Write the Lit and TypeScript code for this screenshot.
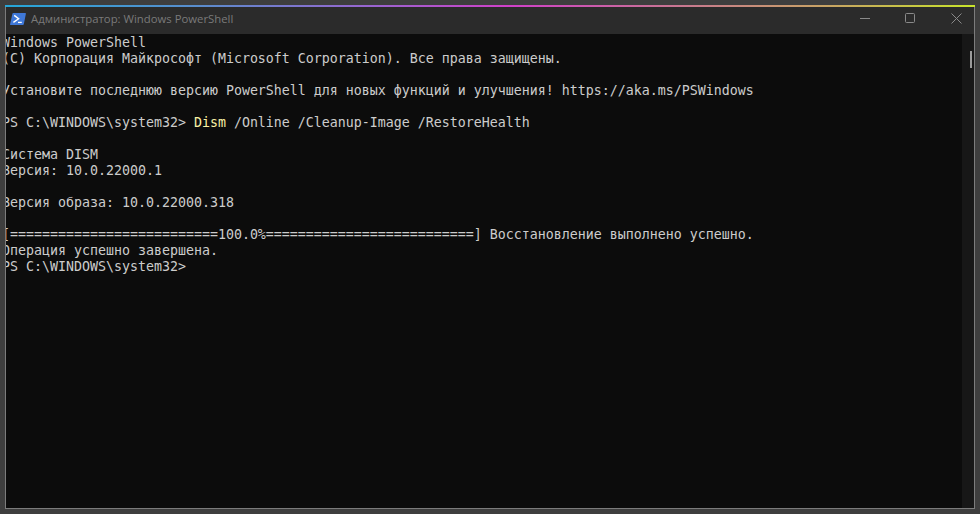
import { LitElement, html, css, svg } from "lit";
import { customElement } from "lit/decorators.js";

const rows: { t: string; y?: string }[] = [
  { t: "Windows PowerShell" },
  { t: "(C) Корпорация Майкрософт (Microsoft Corporation). Все права защищены." },
  { t: "" },
  { t: "Установите последнюю версию PowerShell для новых функций и улучшения! https://aka.ms/PSWindows" },
  { t: "" },
  { t: "PS C:\\WINDOWS\\system32> ", y: "Dism" },
  { t: "" },
  { t: "Система DISM" },
  { t: "Версия: 10.0.22000.1" },
  { t: "" },
  { t: "Версия образа: 10.0.22000.318" },
  { t: "" },
  { t: "[==========================100.0%==========================] Восстановление выполнено успешно." },
  { t: "Операция успешно завершена." },
  { t: "PS C:\\WINDOWS\\system32>" },
];

@customElement("app-root")
export class AppRoot extends LitElement {
  static styles = css`
    :host { display: block; width: 980px; height: 514px; overflow: hidden; }
    .frame { box-sizing: border-box; width: 980px; height: 514px; padding: 5px; background: #3e3e3e; display: flex; flex-direction: column; }
    .accent { height: 2px; flex: none; background: linear-gradient(90deg, #25a6d8 0%, #5a8ccc 20%, #9a64d0 38%, #d040c8 52%, #c8788f 70%, #c8a860 86%, #c8e42a 100%); }
    .win { flex: 1; min-height: 0; display: flex; flex-direction: column; border-left: 1px solid #7c7c7c; border-right: 1px solid #7c7c7c; border-bottom: 1px solid #7c7c7c; }
    .title { height: 27px; flex: none; box-sizing: border-box; padding-bottom: 4px; background: #2b2b2b; display: flex; align-items: center; }
    .ps { margin-left: 4px; width: 16px; height: 12px; flex: none; }
    .ttl { margin-left: 5px; flex: 1; font: 11.33px/16px "Open Sans", "Noto Sans", sans-serif; color: #7a7a7a; }
    .ctls { display: flex; align-items: center; gap: 34.5px; margin-right: 12.5px; flex: none; }
    .ctl { width: 11px; height: 11px; display: block; }
    .body { flex: 1; min-height: 0; display: flex; }
    .term { flex: 1; min-width: 0; overflow: hidden; background: #0c0c0c; padding-top: 1px; box-sizing: border-box; font: 13.29px/16px "DejaVu Sans Mono", monospace; color: #cccccc; }
    .line { height: 16px; margin-left: -4px; white-space: pre; }
    .yl { color: #f9f1a5; }
    .sb { width: 12px; flex: none; background: #171717; display: flex; justify-content: flex-end; padding-top: 17px; box-sizing: border-box; }
    .thumb { width: 2px; height: 17px; margin-right: 2px; background: #9b9b9b; }
  `;

  render() {
    return html`<div class="frame">
      <div class="accent"></div>
      <div class="win">
        <div class="title">
          <svg class="ps" viewBox="0 0 16 12">
            <path d="M3.3 0H15.4Q16.1 0 15.9 .7L13.8 11.3Q13.6 12 12.9 12H.7Q0 12 .1 11.3L2.4 .7Q2.6 0 3.3 0Z" fill="#3f78d8" />
            <path d="M4.2 2.4L8.6 5.8L3.4 9.4" fill="none" stroke="#fff" stroke-width="1.4" />
            <path d="M8 9.4H11.8" stroke="#fff" stroke-width="1.3" />
          </svg>
          <div class="ttl">Администратор: Windows PowerShell</div>
          <div class="ctls">
            ${svg`<svg class="ctl" viewBox="0 0 11 11"><path d="M0 5.5H10" stroke="#8a8a8a"/></svg>`}
            ${svg`<svg class="ctl" viewBox="0 0 11 11"><rect x=".5" y=".5" width="9" height="9" rx="1" fill="none" stroke="#8a8a8a"/></svg>`}
            ${svg`<svg class="ctl" viewBox="0 0 11 11"><path d="M.5 .5L10.5 10.5M10.5 .5L.5 10.5" stroke="#8a8a8a" fill="none"/></svg>`}
          </div>
        </div>
        <div class="body">
          <div class="term">
            ${rows.map((r) =>
              html`<div class="line">${r.y
                ? html`${r.t}<span class="yl">${r.y}</span> /Online /Cleanup-Image /RestoreHealth`
                : r.t}</div>`)}
          </div>
          <div class="sb"><div class="thumb"></div></div>
        </div>
      </div>
    </div>`;
  }
}
